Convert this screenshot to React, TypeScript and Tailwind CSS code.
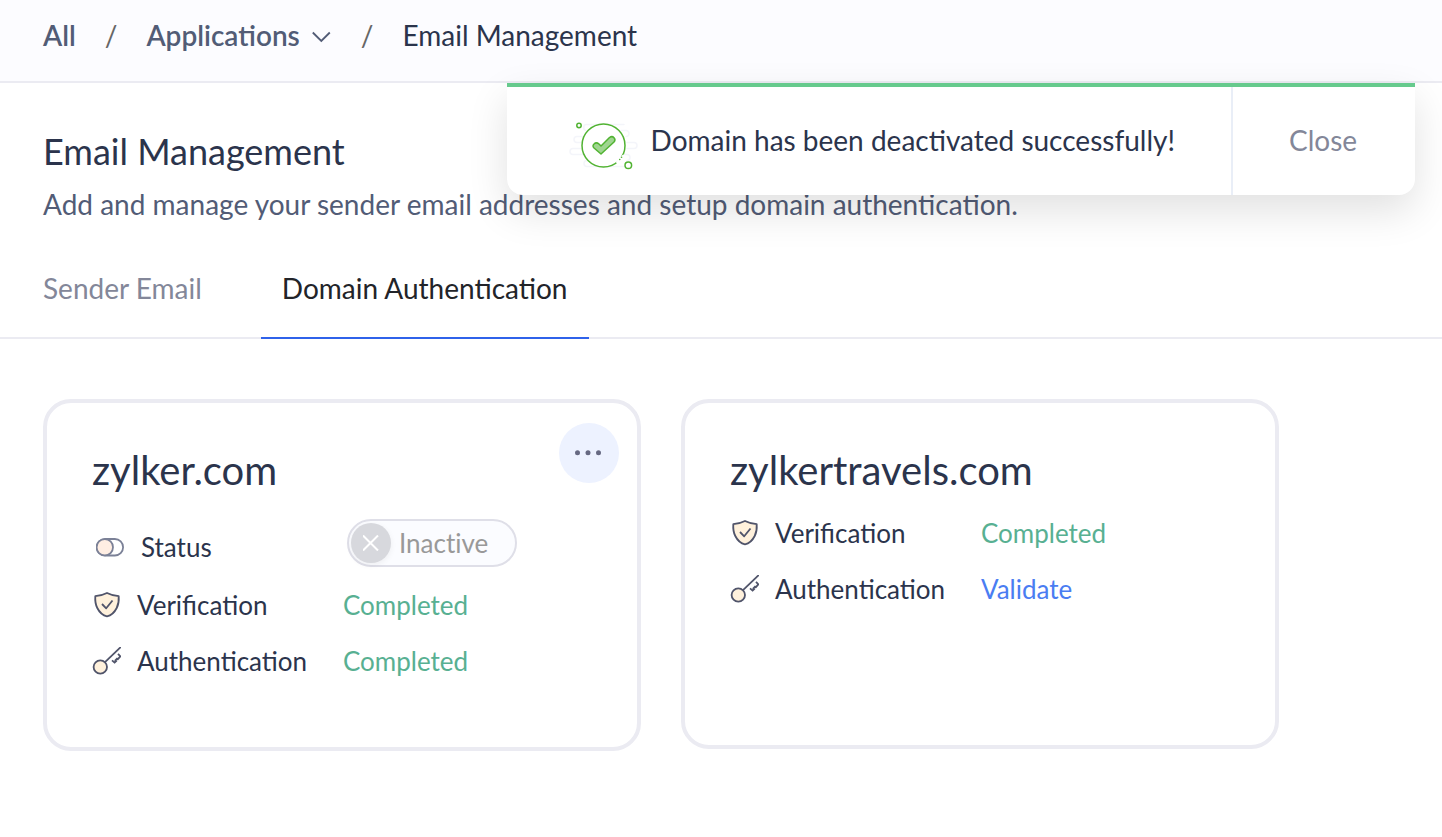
import { useState, type ReactNode } from "react"

const tabs = ["Sender Email", "Domain Authentication"]

export default function App() {
  const [activeTab, setActiveTab] = useState("Domain Authentication")

  return (
    <div className="relative min-h-screen bg-white font-['Lato',sans-serif] text-[28px] leading-9 text-[#2b344c]">
      <Breadcrumb />
      <Notification />

      <main>
        <div className="px-[43px] pt-11">
          <h1 className="text-[36px] leading-12">Email Management</h1>
          <p className="mt-[11px] text-[#525c76]">
            Add and manage your sender email addresses and setup domain authentication.
          </p>
        </div>

        <div role="tablist" className="mt-10 flex gap-[38px] border-b-2 border-[#ebebf2] px-[22px]">
          {tabs.map((tab) => (
            <button
              key={tab}
              type="button"
              role="tab"
              aria-selected={tab === activeTab}
              onClick={() => setActiveTab(tab)}
              className={
                tab === activeTab
                  ? "-mb-0.5 border-b-2 border-[#2f62ea] px-[21px] pt-2 pb-[31px] text-[#222429]"
                  : "-mb-0.5 border-b-2 border-transparent px-[21px] pt-2 pb-[31px] text-[#838799]"
              }
            >
              {tab}
            </button>
          ))}
        </div>

        <div className="grid max-w-[1322px] grid-cols-2 items-start gap-10 px-[43px] pt-15">
          <DomainCard name="zylker.com" menu>
            <StatusRow />
            <Row icon={<ShieldIcon />} label="Verification">
              <span className="text-[#58b092]">Completed</span>
            </Row>
            <Row icon={<KeyIcon />} label="Authentication">
              <span className="text-[#58b092]">Completed</span>
            </Row>
          </DomainCard>
          <DomainCard name="zylkertravels.com">
            <Row icon={<ShieldIcon />} label="Verification">
              <span className="text-[#58b092]">Completed</span>
            </Row>
            <Row icon={<KeyIcon />} label="Authentication">
              <a href="#validate" className="text-[#4a7df2]">
                Validate
              </a>
            </Row>
          </DomainCard>
        </div>
      </main>
    </div>
  )
}

function Breadcrumb() {
  return (
    <nav
      aria-label="Breadcrumb"
      className="flex items-center gap-[29px] border-b-2 border-[#ebebf2] bg-[#fcfcff] px-[43px] pt-[17px] pb-7"
    >
      <a href="#all" className="font-semibold text-[#525c76]">
        All
      </a>
      <span className="text-[#666]">/</span>
      <button type="button" className="flex items-center gap-3 font-semibold text-[#525c76]">
        Applications
        <svg className="mt-1 h-3 w-5" viewBox="0 0 20 12" fill="none" stroke="currentColor" strokeWidth="1.800">
          <path d="M.8 1.500 9.300 10l8.500-8.500" />
        </svg>
      </button>
      <span className="text-[#666]">/</span>
      <span aria-current="page">Email Management</span>
    </nav>
  )
}

function Notification() {
  return (
    <div
      role="status"
      className="absolute top-[83px] right-[27px] flex h-28 rounded-b-2xl border-t-4 border-[#66ca8d] bg-white shadow-[0_16px_40px_rgba(0,0,0,0.12)]"
    >
      <div className="flex items-center gap-3 pr-14 pb-0.5 pl-[62px]">
        <SuccessIcon />
        Domain has been deactivated successfully!
      </div>
      <button type="button" className="w-46 border-l-2 border-[#e9eef7] pr-0.5 pb-0.5 text-[#838799]">
        Close
      </button>
    </div>
  )
}

type DomainCardProps = { name: string; menu?: boolean; children: ReactNode }

function DomainCard({ name, menu, children }: DomainCardProps) {
  return (
    <section className="relative min-h-[350px] rounded-[28px] border-4 border-[#ebebf2] px-[45px] pt-[43px] pb-[58px]">
      <h2 className="mb-[11px] text-[40px] leading-12">{name}</h2>
      {menu && (
        <button
          type="button"
          aria-label={`More actions for ${name}`}
          className="absolute top-5 right-[18px] flex size-15 items-center justify-center rounded-full bg-[#edf2ff] text-[#666982]"
        >
          <svg className="h-[6px] w-7" viewBox="0 0 28 6" fill="currentColor">
            <circle cx="2.500" cy="2.700" r="2.500" />
            <circle cx="13" cy="2.700" r="2.500" />
            <circle cx="23.500" cy="2.700" r="2.500" />
          </svg>
        </button>
      )}
      <div className="text-[26px]">{children}</div>
    </section>
  )
}

function Row({ icon, label, children }: { icon: ReactNode; label: string; children: ReactNode }) {
  return (
    <div className="flex h-14 items-center">
      {icon}
      <span className="ml-4 w-[206px]">{label}</span>
      {children}
    </div>
  )
}

function StatusRow() {
  const [active, setActive] = useState(false)

  return (
    <div className="flex h-[72px] items-center pl-1">
      <div className="flex items-center pt-3">
        <ToggleIcon />
        <label htmlFor="domain-status" className="ml-4 w-[206px]">
          Status
        </label>
      </div>
      <label className="mt-1 flex h-12 w-[170px] items-center gap-2 rounded-full border-2 border-[#dfdfe8] bg-[#fbfcff] pl-0.5 text-[#999] [font-variant-ligatures:none]">
        <input
          id="domain-status"
          type="checkbox"
          className="sr-only"
          checked={active}
          onChange={(e) => setActive(e.target.checked)}
        />
        <span className="flex size-10 items-center justify-center rounded-full bg-[#d7d8dd] shadow-[0_2px_6px_rgba(0,0,0,0.06)]">
          <svg className="size-4" viewBox="0 0 16 16" fill="none" stroke="white" strokeWidth="2">
            <path d="M0 .5l15 15M15 .5l-15 15" />
          </svg>
        </span>
        {active ? "Active" : "Inactive"}
      </label>
    </div>
  )
}

// Icons
function ToggleIcon() {
  return (
    <svg className="h-5 w-[29px]" viewBox="0 0 29 20" stroke="#7b8197" strokeWidth="1.800">
      <rect x="0.900" y="2" width="26.200" height="16.500" rx="8.250" fill="none" />
      <circle cx="8.800" cy="10.250" r="8.200" fill="#ffeee3" />
    </svg>
  )
}

function ShieldIcon() {
  return (
    <svg
      className="h-7 w-[29px]"
      viewBox="0 0 29 28"
      fill="none"
      stroke="#50546a"
      strokeWidth="1.800"
      strokeLinejoin="round"
    >
      <path
        d="M15 2C11.500 3.800 7.500 4.800 3.300 5.200c-.3 3.800.2 8.200 2 11.800 2.100 4.200 5.700 7.500 9.700 8.400 4-.9 7.600-4.200 9.700-8.400 1.800-3.600 2.300-8 2-11.800C22.500 4.800 18.500 3.800 15 2z"
        fill="#fff1dc"
      />
      <path d="M10 13l4.200 4.300L20.500 9.500" />
    </svg>
  )
}

function KeyIcon() {
  return (
    <svg className="h-7 w-[29px]" viewBox="0 0 29 28" fill="none" stroke="#50546a" strokeWidth="1.800">
      <path d="M13 15.200 28.800 0" />
      <path d="M26 6.800l2.400 2.600-2.600 2.800-.8-.6-1.600 1.700.7.800-1.500 1.500-2.600-2.300" />
      <circle cx="8.300" cy="20" r="6.700" fill="#fff1dc" />
    </svg>
  )
}

function SuccessIcon() {
  return (
    <svg className="mt-[10px] h-13 w-[70px]" viewBox="0 0 70 52" fill="none" strokeLinecap="round">
      <g stroke="#f4f5fa" strokeWidth="1.500">
        <path d="M17 5.500h38M17 5.500c-3 0-3 6 0 6M52 11.500h5c4 0 4 6 0 6M13 17.500H8c-4 0-4 6 0 6h4M58 23.500h7c4 0 4 6 0 6h-7M12 29.500H4c-4 0-4 6 0 6h11M53 35.500h5c4 0 4 6 0 6M18 41.500c-4 0-4 6 0 6h37" />
      </g>
      <circle cx="34.500" cy="26.500" r="21.500" fill="#fff" stroke="#51b332" strokeWidth="1.500" />
      <path d="M48.500 43l6-6" stroke="#fff" strokeWidth="3" />
      <path d="M50.700 40.500h.1M52.500 38.300h.1" stroke="#51b332" strokeWidth="1.500" />
      <path
        d="M25 25c1.500-1.500 3.500-1.300 5 0l2 2 8.500-8.500c3.500-2.500 7 1.500 4.500 4.500L32 35l-7-6c-1.300-1.200-1.300-2.800 0-4z"
        fill="#9fd590"
        stroke="#51b332"
        strokeWidth="1.500"
        strokeLinejoin="round"
      />
      <circle cx="10" cy="6.500" r="2.200" stroke="#51b332" strokeWidth="1.500" />
      <circle cx="59.300" cy="46.300" r="3.300" stroke="#51b332" strokeWidth="1.500" />
    </svg>
  )
}
